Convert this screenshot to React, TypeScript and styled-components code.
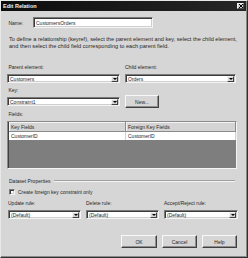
import React from "react";
import styled, { createGlobalStyle } from "styled-components";

const GlobalStyle = createGlobalStyle`
  html, body {
    margin: 0;
    padding: 0;
    background: #d4d4d4;
  }
  body {
    font-family: "Liberation Sans", Arial, sans-serif;
    font-size: 5px;
    color: #262626;
  }
`;

const Window = styled.div`
  width: 248px;
  height: 258px;
  box-sizing: border-box;
  background: #d6d6d6;
  border: 1px solid #e8e8e8;
  border-right-color: #303030;
  border-bottom-color: #303030;
  box-shadow: inset -1px -1px 0 #8a8a8a;
  display: flex;
  flex-direction: column;
`;

const TitleBar = styled.div`
  height: 10px;
  margin: 0 1px 0 0;
  background: linear-gradient(90deg, #0c0c0c, #262626);
  color: #f4f4f4;
  font-weight: bold;
  font-size: 5.5px;
  display: flex;
  align-items: center;
  justify-content: space-between;
  padding: 0 2px 0 2px;
`;

const CloseButton = styled.div`
  width: 7px;
  height: 6px;
  box-sizing: border-box;
  background: #d0d0d0;
  border: 1px solid #f0f0f0;
  border-right-color: #505050;
  border-bottom-color: #505050;
  display: flex;
  align-items: center;
  justify-content: center;
`;

const Body = styled.div`
  flex: 1;
  padding: 3px 10px 0 6px;
  display: flex;
  flex-direction: column;
`;

const Row = styled.div`
  display: flex;
  align-items: center;
`;

const Label = styled.div<{ $width?: number }>`
  width: ${(p) => (p.$width ? `${p.$width}px` : "auto")};
  line-height: 6px;
  height: 6px;
  white-space: nowrap;
`;

const Sunken = styled.div<{ $width?: number; $height?: number }>`
  box-sizing: border-box;
  width: ${(p) => (p.$width ? `${p.$width}px` : "100%")};
  height: ${(p) => p.$height ?? 9}px;
  background: #fff;
  border: 1px solid #7a7a7a;
  border-right-color: #f4f4f4;
  border-bottom-color: #f4f4f4;
  box-shadow: inset 1px 1px 0 #3a3a3a, inset -1px -1px 0 #cfcfcf;
  display: flex;
  align-items: center;
  padding-left: 2px;
  white-space: nowrap;
  overflow: hidden;
`;

const Paragraph = styled.p`
  margin: 8px 0 0 2px;
  line-height: 6.5px;
  font-size: 5.6px;
  white-space: nowrap;
`;

const Columns = styled.div`
  display: grid;
  grid-template-columns: 113px 111px;
  column-gap: 5px;
  align-items: end;
`;

const Field = styled.div`
  display: flex;
  flex-direction: column;
  gap: 4px;
`;

const SelectBox = styled(Sunken)`
  justify-content: space-between;
  padding-right: 1px;
`;

const DropButton = styled.div`
  width: 7px;
  height: 6px;
  box-sizing: border-box;
  background: #d4d4d4;
  border: 1px solid #f4f4f4;
  border-right-color: #404040;
  border-bottom-color: #404040;
  display: flex;
  align-items: center;
  justify-content: center;
  flex: none;
`;

const Arrow = styled.div`
  width: 0;
  height: 0;
  border-left: 2px solid transparent;
  border-right: 2px solid transparent;
  border-top: 2px solid #000;
`;

const PushButton = styled.div<{ $width: number }>`
  box-sizing: border-box;
  width: ${(p) => p.$width}px;
  height: 13px;
  background: #d6d6d6;
  border: 1px solid #f8f8f8;
  border-right-color: #404040;
  border-bottom-color: #404040;
  box-shadow: inset -1px -1px 0 #8e8e8e;
  display: flex;
  align-items: center;
  justify-content: center;
`;

const Grid = styled.div`
  margin-top: 4px;
  height: 48px;
  box-sizing: border-box;
  border: 1px solid #8a8a8a;
  border-right-color: #f4f4f4;
  border-bottom-color: #f4f4f4;
  box-shadow: inset 1px 1px 0 #404040;
  display: flex;
  flex-direction: column;
  overflow: hidden;
`;

const GridRow = styled.div<{ $header?: boolean }>`
  display: grid;
  grid-template-columns: 117px 1fr;
  height: ${(p) => (p.$header ? 10 : 8)}px;
  flex: none;
  background: ${(p) => (p.$header ? "#d4d4d4" : "#ffffff")};
  margin-left: 1px;
`;

const GridEmpty = styled.div`
  flex: 1;
  margin-left: 1px;
  background: #7e7e7e;
`;

const GridCell = styled.div<{ $header?: boolean }>`
  display: flex;
  align-items: center;
  padding-left: 2px;
  box-sizing: border-box;
  border-right: 1px solid ${(p) => (p.$header ? "#8a8a8a" : "#d0d0d0")};
  ${(p) =>
    p.$header &&
    `border-bottom: 1px solid #8a8a8a; box-shadow: inset 1px 1px 0 #f4f4f4;`}
`;

const Group = styled.div`
  margin-top: 9px;
  display: flex;
  align-items: center;
  gap: 4px;
  padding-left: 2px;
  padding-right: 2px;
`;

const Etched = styled.div`
  flex: 1;
  height: 0;
  border-top: 1px solid #a0a0a0;
  border-bottom: 1px solid #f4f4f4;
`;

const CheckRow = styled.div`
  margin-top: 5px;
  display: flex;
  align-items: center;
  gap: 3px;
  padding-left: 2px;
`;

const CheckBox = styled(Sunken)`
  padding: 0;
`;

const Rules = styled.div`
  margin-top: 5px;
  display: grid;
  grid-template-columns: 73px 73px 74px;
  column-gap: 5px;
  padding-left: 1px;
`;

const Buttons = styled.div`
  margin-top: 16px;
  display: flex;
  justify-content: flex-end;
  gap: 5px;
`;

const Select: React.FC<{ value: string; width?: number }> = ({ value, width }) => (
  <SelectBox $width={width}>
    <span>{value}</span>
    <DropButton>
      <Arrow />
    </DropButton>
  </SelectBox>
);

export default function App() {
  return (
    <>
      <GlobalStyle />
      <Window>
        <TitleBar>
          <span>Edit Relation</span>
          <CloseButton>
            <svg width="4" height="4" viewBox="0 0 4 4">
              <path d="M0 0L4 4M4 0L0 4" stroke="#000" strokeWidth="1" />
            </svg>
          </CloseButton>
        </TitleBar>
        <Body>
          <Row style={{ marginTop: 3 }}>
            <Label $width={26}>&nbsp;Name:</Label>
            <Sunken $width={120} $height={11}>
              CustomersOrders
            </Sunken>
          </Row>
          <Paragraph>
            To define a relationship (keyref), select the parent element and key, select the child element,
            <br />
            and then select the child field corresponding to each parent field.
          </Paragraph>
          <Columns style={{ marginTop: 15 }}>
            <Field>
              <Label>&nbsp;Parent element:</Label>
              <Select value="Customers" />
            </Field>
            <Field>
              <Label>Child element:</Label>
              <Select value="Orders" />
            </Field>
          </Columns>
          <Columns style={{ marginTop: 4 }}>
            <Field>
              <Label>&nbsp;Key:</Label>
              <Select value="Constraint1" />
            </Field>
            <Field>
              <PushButton $width={34} style={{ marginBottom: -2 }}>
                New...
              </PushButton>
            </Field>
          </Columns>
          <Label style={{ marginTop: 5 }}>&nbsp;Fields:</Label>
          <Grid>
            <GridRow $header>
              <GridCell $header>Key Fields</GridCell>
              <GridCell $header>Foreign Key Fields</GridCell>
            </GridRow>
            <GridRow>
              <GridCell>CustomerID</GridCell>
              <GridCell>CustomerID</GridCell>
            </GridRow>
            <GridEmpty />
          </Grid>
          <Group>
            <span>Dataset Properties</span>
            <Etched />
          </Group>
          <CheckRow>
            <CheckBox $width={6} $height={6} />
            <span>Create foreign key constraint only</span>
          </CheckRow>
          <Rules>
            <Field>
              <Label>Update rule:</Label>
              <Select value="(Default)" />
            </Field>
            <Field>
              <Label>Delete rule:</Label>
              <Select value="(Default)" />
            </Field>
            <Field>
              <Label>Accept/Reject rule:</Label>
              <Select value="(Default)" />
            </Field>
          </Rules>
          <Buttons>
            <PushButton $width={36}>OK</PushButton>
            <PushButton $width={35}>Cancel</PushButton>
            <PushButton $width={35}>Help</PushButton>
          </Buttons>
        </Body>
      </Window>
    </>
  );
}
